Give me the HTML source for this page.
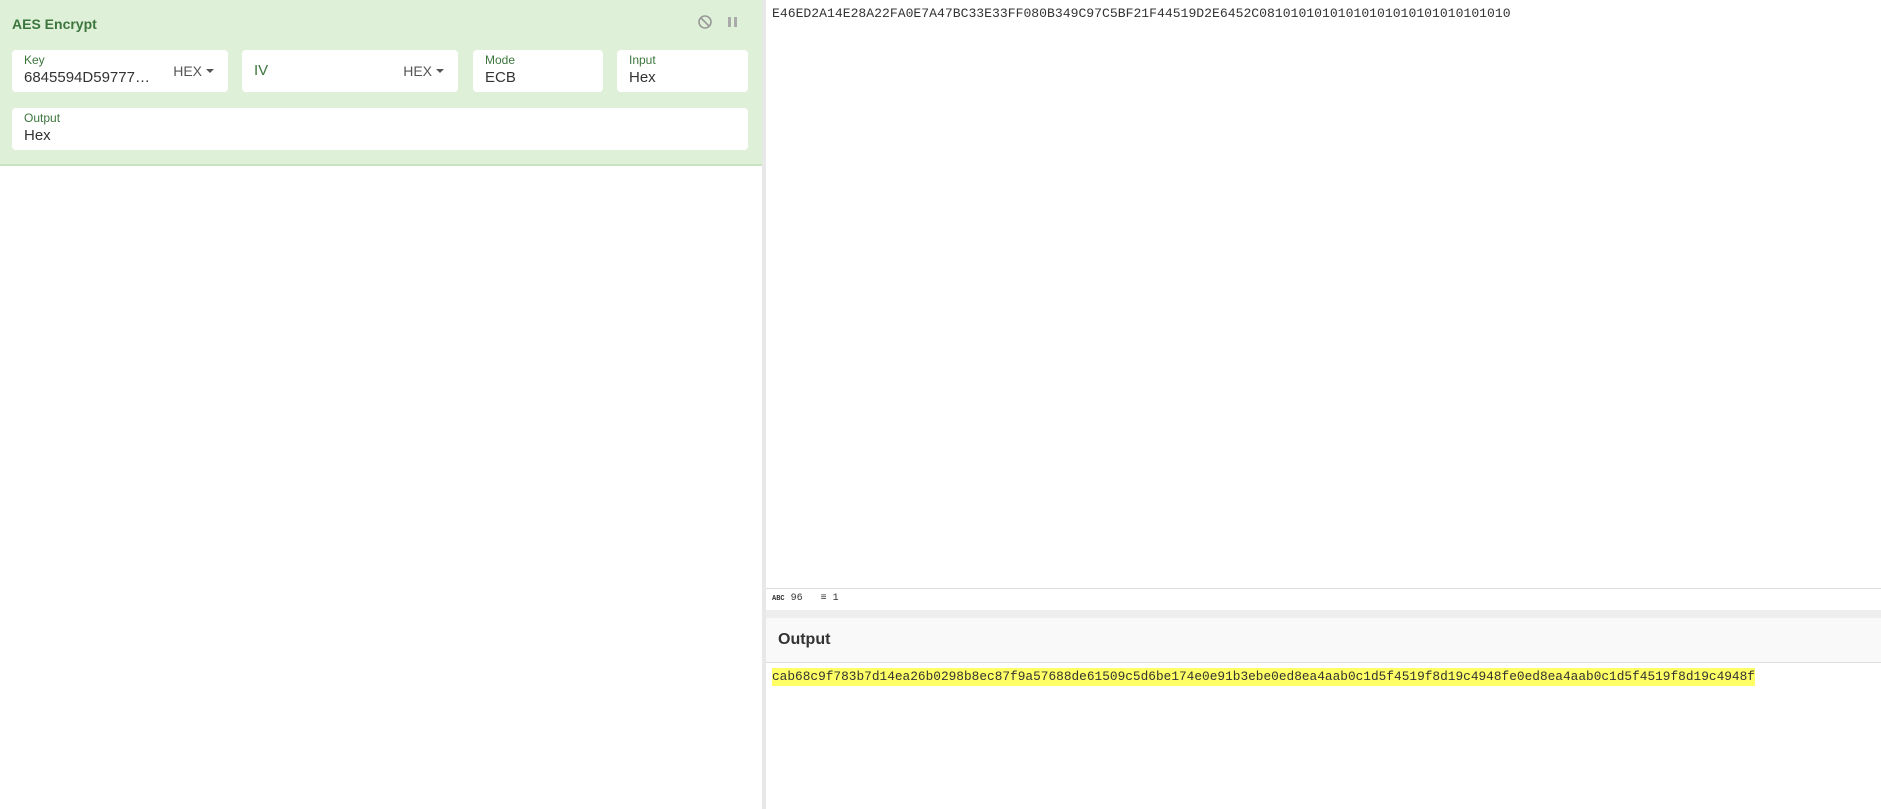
<!DOCTYPE html>
<html><head><style>
body{margin:0;width:1881px;height:809px;position:relative;overflow:hidden;background:#fff;font-family:"Liberation Sans",sans-serif;}
.abs{position:absolute}
#left{left:0;top:0;width:762px;height:809px;border-right:1px solid #ddd}
#rec{left:0;top:0;width:762px;height:164px;background:#dff0d8;border-bottom:2px solid #c9e3c0}
.title{left:12px;top:16px;font-weight:bold;font-size:14px;color:#3c763d}
.box{background:#fff;border-radius:4px;height:42px;top:50px}
.lbl{position:absolute;left:12px;top:3px;font-size:12px;color:#3c763d}
.val{position:absolute;left:12px;top:19px;font-size:15px;color:#333}
.hex{position:absolute;right:14px;top:13px;font-size:14px;color:#555}
.hex:after{content:"";display:inline-block;margin-left:4px;vertical-align:3px;border-left:4px solid transparent;border-right:4px solid transparent;border-top:4px solid #555}
.mono{font-family:"Liberation Mono",monospace;font-size:12.8px;color:#333}
</style></head><body>
<div id="left" class="abs"></div>
<div id="rec" class="abs">
 <div class="abs title">AES Encrypt</div>
 <svg class="abs" style="left:697px;top:14px" width="16" height="16"><circle cx="8" cy="8" r="6" fill="none" stroke="#999" stroke-width="1.6"/><line x1="4" y1="4" x2="12" y2="12" stroke="#999" stroke-width="1.6"/></svg>
 <div class="abs" style="left:728px;top:17px;width:3px;height:10px;background:#aaa"></div>
 <div class="abs" style="left:734px;top:17px;width:3px;height:10px;background:#aaa"></div>
 <div class="abs box" style="left:12px;width:216px"><span class="lbl">Key</span><span class="val">6845594D59777…</span><span class="hex">HEX</span></div>
 <div class="abs box" style="left:242px;width:216px"><span class="val" style="top:12px;color:#3c763d">IV</span><span class="hex">HEX</span></div>
 <div class="abs box" style="left:473px;width:130px"><span class="lbl">Mode</span><span class="val">ECB</span></div>
 <div class="abs box" style="left:617px;width:131px"><span class="lbl">Input</span><span class="val">Hex</span></div>
 <div class="abs box" style="left:12px;width:736px;top:108px"><span class="lbl">Output</span><span class="val">Hex</span></div>
</div>
<div class="abs" style="left:762px;top:0;width:4px;height:809px;background:#e8e8e8"></div>
<div class="abs mono" style="left:772px;top:6px;font-size:13.1px">E46ED2A14E28A22FA0E7A47BC33E33FF080B349C97C5BF21F44519D2E6452C08101010101010101010101010101010</div>
<div class="abs" style="left:766px;top:588px;right:0;height:1px;background:#ddd"></div>
<div class="abs" style="left:772px;top:593px;font-size:10px;color:#333;font-family:'Liberation Mono',monospace"><b style="font-size:7px">ABC</b> 96 &nbsp; ≡ 1</div>
<div class="abs" style="left:766px;top:610px;right:0;height:8px;background:#eee"></div>
<div class="abs" style="left:766px;top:618px;right:0;height:44px;background:#f9f9f9;border-bottom:1px solid #ddd"></div>
<div class="abs" style="left:778px;top:631px;font-size:16px;font-weight:bold;color:#333">Output</div>
<div class="abs mono" style="left:772px;top:668px;background:#ffff66;line-height:18px">cab68c9f783b7d14ea26b0298b8ec87f9a57688de61509c5d6be174e0e91b3ebe0ed8ea4aab0c1d5f4519f8d19c4948fe0ed8ea4aab0c1d5f4519f8d19c4948f</div>
</body></html>
